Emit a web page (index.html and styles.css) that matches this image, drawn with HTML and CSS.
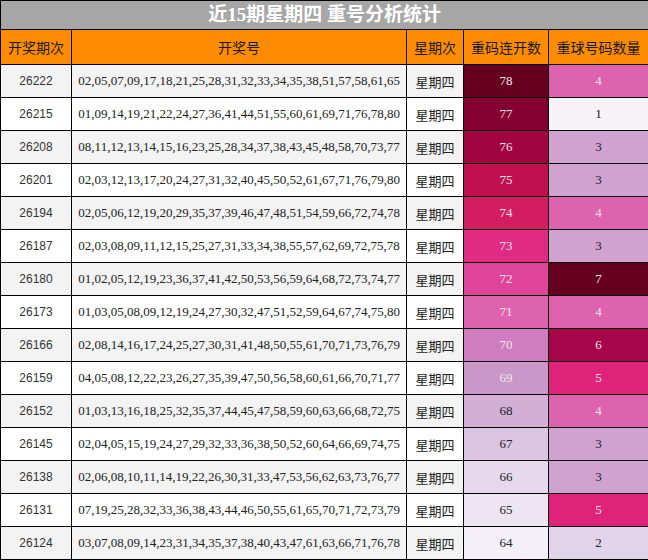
FILE: index.html
```html
<!DOCTYPE html>
<html lang="zh">
<head>
<meta charset="utf-8">
<title>近15期星期四 重号分析统计</title>
<link rel="stylesheet" href="styles.css">
</head>
<body>
<table class="stat">
  <colgroup>
    <col class="c-period"><col class="c-nums"><col class="c-week"><col class="c-rep"><col class="c-cnt">
  </colgroup>
  <thead>
    <tr class="title-row"><th colspan="5" class="title">近15期星期四 重号分析统计</th></tr>
    <tr class="head-row">
      <th>开奖期次</th><th>开奖号</th><th>星期次</th><th>重码连开数</th><th>重球号码数量</th>
    </tr>
  </thead>
  <tbody>
    <tr class="odd"><td class="period">26222</td><td class="nums">02,05,07,09,17,18,21,25,28,31,32,33,34,35,38,51,57,58,61,65</td><td class="week">星期四</td><td class="num light" style="background:#660021">78</td><td class="num light" style="background:#de63ae">4</td></tr>
    <tr><td class="period">26215</td><td class="nums">01,09,14,19,21,22,24,27,36,41,44,51,55,60,61,69,71,76,78,80</td><td class="week">星期四</td><td class="num light" style="background:#830030">77</td><td class="num" style="background:#f5f2f8">1</td></tr>
    <tr class="odd"><td class="period">26208</td><td class="nums">08,11,12,13,14,15,16,23,25,28,34,37,38,43,45,48,58,70,73,77</td><td class="week">星期四</td><td class="num light" style="background:#a20442">76</td><td class="num" style="background:#d0a2cf">3</td></tr>
    <tr><td class="period">26201</td><td class="nums">02,03,12,13,17,20,24,27,31,32,40,45,50,52,61,67,71,76,79,80</td><td class="week">星期四</td><td class="num light" style="background:#c0104f">75</td><td class="num" style="background:#d0a2cf">3</td></tr>
    <tr class="odd"><td class="period">26194</td><td class="nums">02,05,06,12,19,20,29,35,37,39,46,47,48,51,54,59,66,72,74,78</td><td class="week">星期四</td><td class="num light" style="background:#d41c63">74</td><td class="num light" style="background:#de63ae">4</td></tr>
    <tr><td class="period">26187</td><td class="nums">02,03,08,09,11,12,15,25,27,31,33,34,38,55,57,62,69,72,75,78</td><td class="week">星期四</td><td class="num light" style="background:#e02a84">73</td><td class="num" style="background:#d0a2cf">3</td></tr>
    <tr class="odd"><td class="period">26180</td><td class="nums">01,02,05,12,19,23,36,37,41,42,50,53,56,59,64,68,72,73,74,77</td><td class="week">星期四</td><td class="num light" style="background:#e0449a">72</td><td class="num light" style="background:#660020">7</td></tr>
    <tr><td class="period">26173</td><td class="nums">01,03,05,08,09,12,19,24,27,30,32,47,51,52,59,64,67,74,75,80</td><td class="week">星期四</td><td class="num light" style="background:#dd63ae">71</td><td class="num light" style="background:#de63ae">4</td></tr>
    <tr class="odd"><td class="period">26166</td><td class="nums">02,08,14,16,17,24,25,27,30,31,41,48,50,55,61,70,71,73,76,79</td><td class="week">星期四</td><td class="num light" style="background:#d07dbf">70</td><td class="num light" style="background:#a8064a">6</td></tr>
    <tr><td class="period">26159</td><td class="nums">04,05,08,12,22,23,26,27,35,39,47,50,56,58,60,61,66,70,71,77</td><td class="week">星期四</td><td class="num light" style="background:#c997c8">69</td><td class="num light" style="background:#e0237a">5</td></tr>
    <tr class="odd"><td class="period">26152</td><td class="nums">01,03,13,16,18,25,32,35,37,44,45,47,58,59,60,63,66,68,72,75</td><td class="week">星期四</td><td class="num" style="background:#d3afd8">68</td><td class="num light" style="background:#de63ae">4</td></tr>
    <tr><td class="period">26145</td><td class="nums">02,04,05,15,19,24,27,29,32,33,36,38,50,52,60,64,66,69,74,75</td><td class="week">星期四</td><td class="num" style="background:#dcc5e2">67</td><td class="num" style="background:#d0a2cf">3</td></tr>
    <tr class="odd"><td class="period">26138</td><td class="nums">02,06,08,10,11,14,19,22,26,30,31,33,47,53,56,62,63,73,76,77</td><td class="week">星期四</td><td class="num" style="background:#e6d9ec">66</td><td class="num" style="background:#d0a2cf">3</td></tr>
    <tr><td class="period">26131</td><td class="nums">07,19,25,28,32,33,36,38,43,44,46,50,55,61,65,70,71,72,73,79</td><td class="week">星期四</td><td class="num" style="background:#ede6f2">65</td><td class="num light" style="background:#e0237a">5</td></tr>
    <tr class="odd"><td class="period">26124</td><td class="nums">03,07,08,09,14,23,31,34,35,37,38,40,43,47,61,63,66,71,76,78</td><td class="week">星期四</td><td class="num" style="background:#f4f0f7">64</td><td class="num" style="background:#e1d3e9">2</td></tr>
  </tbody>
</table>
</body>
</html>
```

FILE: styles.css
```css
html, body {
  margin: 0;
  padding: 0;
  background: #ffffff;
}

.stat {
  width: 648px;
  border-collapse: collapse;
  table-layout: fixed;
  font-family: "Liberation Serif", "Noto Sans CJK SC", serif;
  color: #222;
}

.c-period { width: 71px; }
.c-nums { width: 335px; }
.c-week { width: 57px; }
.c-rep { width: 85px; }
.c-cnt { width: 100px; }

.stat th,
.stat td {
  border: 1px solid #000;
  padding: 0;
  text-align: center;
  vertical-align: middle;
  white-space: nowrap;
  overflow: hidden;
}

.title-row { height: 29px; }

.title {
  background: #a6a6a6;
  color: #ffffff;
  font-family: "Liberation Serif", "Noto Sans CJK SC", serif;
  font-size: 19px;
  font-weight: bold;
  line-height: 26px;
}

.head-row { height: 35px; }

.head-row th {
  background: #ff8c00;
  color: #1a1a1a;
  font-family: "Noto Sans CJK SC", sans-serif;
  font-size: 14px;
  font-weight: normal;
}

.stat tbody tr { height: 33px; background: #ffffff; }
.stat tbody tr.odd { background: #f3f3f3; }

.period {
  font-family: "Liberation Sans", sans-serif;
  font-size: 12px;
  color: #333;
}

.nums {
  font-family: "Liberation Serif", serif;
  font-size: 13px;
  color: #222;
}

.week {
  font-family: "Noto Sans CJK SC", sans-serif;
  font-size: 13px;
  color: #222;
}

.num {
  font-family: "Liberation Serif", serif;
  font-size: 13px;
  color: #222;
}

.num.light { color: #f0e6ee; }
```
